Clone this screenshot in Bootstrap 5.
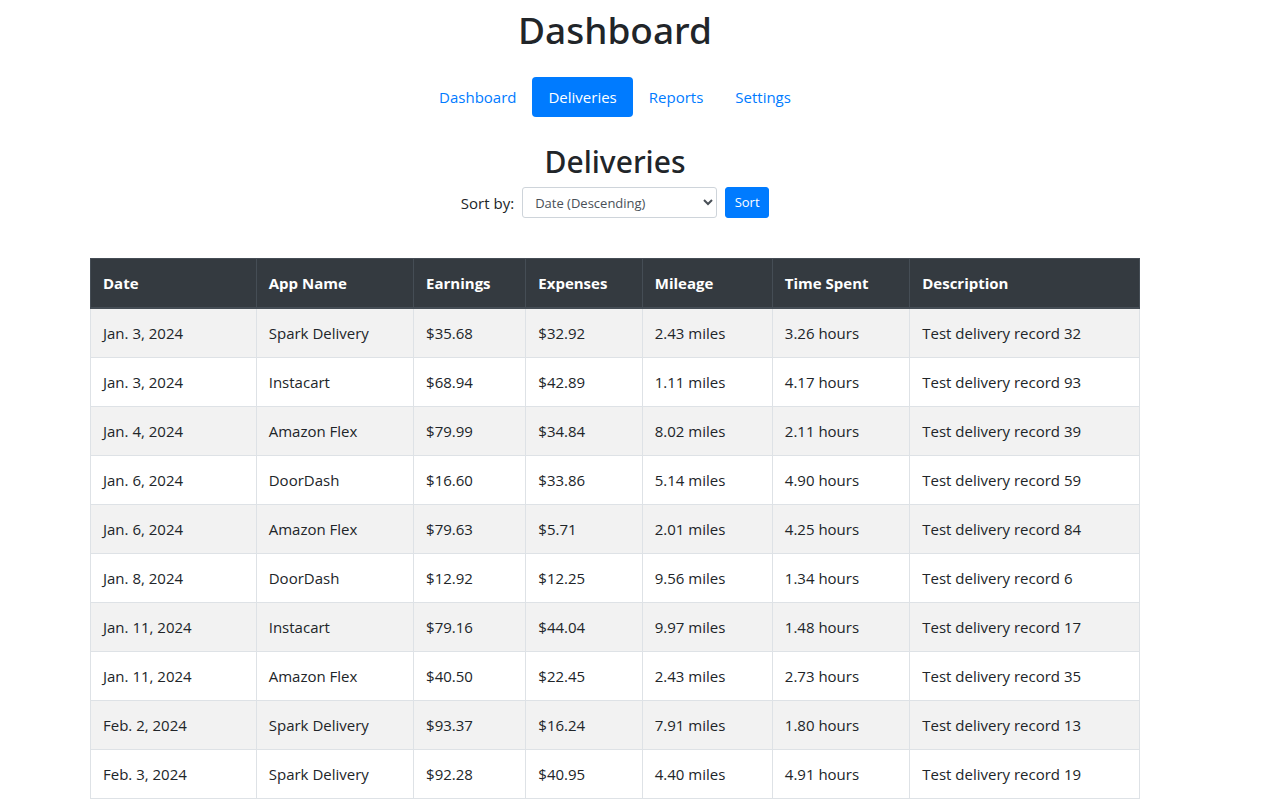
<!DOCTYPE html>
<html lang="en">
<head>
<meta charset="utf-8">
<meta name="viewport" content="width=device-width, initial-scale=1">
<title>Dashboard</title>
<link href="https://cdn.jsdelivr.net/npm/bootstrap@5.3.0/dist/css/bootstrap.min.css" rel="stylesheet">
<style>
  :root { --accent: #007bff; --edge: #dee2e6; --edge-dark: #454d55; }
  body { font-family: "Segoe UI", "Open Sans", "Noto Sans", sans-serif; font-size: 15px; line-height: 24px; padding-right: 43px; }
  .page { max-width: 1140px; padding: 6px 45px 0; }
  h1, h2 { font-family: "Segoe UI", "Noto Sans", "Open Sans", sans-serif; font-weight: 500; }
  h1 { font-size: 37px; line-height: 48px; }
  h2 { font-size: 30px; line-height: 42px; }
  .main-nav { margin-top: 23px; }
  .nav-pills { --bs-nav-pills-link-active-bg: var(--accent); --bs-nav-pills-border-radius: 4px; --bs-nav-link-color: var(--accent); --bs-nav-link-hover-color: #0056b3; }
  .sort-select { width: 195px; height: 31px; padding: 4px 8px; font-size: 13px; line-height: 21px; color: #495057; background: #fff; border: 1px solid #ced4da; border-radius: 3px; }
  .btn-sort { --bs-btn-bg: var(--accent); --bs-btn-border-color: var(--accent); --bs-btn-padding-x: 8px; --bs-btn-padding-y: 4px; --bs-btn-font-size: 13px; --bs-btn-border-radius: 3px; width: 44px; line-height: 21px; }
  .deliveries { table-layout: fixed; margin-top: 40px; border-color: var(--edge); }
  .deliveries th, .deliveries td { padding: 12px; border: 1px solid var(--edge); }
  .deliveries thead th { color: #fff; background: #343a40; border-color: var(--edge-dark); border-bottom-width: 2px; }
  .deliveries tbody tr:nth-child(odd) td { background: #f2f2f2; }
</style>
</head>
<body>
<main class="container-fluid page">
  <h1 class="text-center mb-0">Dashboard</h1>
  <nav aria-label="Main">
    <ul class="nav nav-pills justify-content-center main-nav mb-4">
      <li class="nav-item"><a class="nav-link" href="#">Dashboard</a></li>
      <li class="nav-item"><a class="nav-link active" aria-current="page" href="#">Deliveries</a></li>
      <li class="nav-item"><a class="nav-link" href="#">Reports</a></li>
      <li class="nav-item"><a class="nav-link" href="#">Settings</a></li>
    </ul>
  </nav>
  <h2 class="text-center mb-1">Deliveries</h2>
  <form class="d-flex justify-content-center align-items-center gap-2">
    <label for="sort">Sort by:</label>
    <select class="sort-select" id="sort">
      <option>Date (Descending)</option>
      <option>Date (Ascending)</option>
    </select>
    <button class="btn btn-primary btn-sort" type="submit">Sort</button>
  </form>
  <table class="table deliveries mb-0">
    <colgroup>
      <col style="width:15.8%"><col style="width:15%"><col style="width:10.7%"><col style="width:11.1%"><col style="width:12.4%"><col style="width:13.1%"><col style="width:21.9%">
    </colgroup>
    <thead>
      <tr><th scope="col">Date</th><th scope="col">App Name</th><th scope="col">Earnings</th><th scope="col">Expenses</th><th scope="col">Mileage</th><th scope="col">Time Spent</th><th scope="col">Description</th></tr>
    </thead>
    <tbody>
      <tr><td>Jan. 3, 2024</td><td>Spark Delivery</td><td>$35.68</td><td>$32.92</td><td>2.43 miles</td><td>3.26 hours</td><td>Test delivery record 32</td></tr>
      <tr><td>Jan. 3, 2024</td><td>Instacart</td><td>$68.94</td><td>$42.89</td><td>1.11 miles</td><td>4.17 hours</td><td>Test delivery record 93</td></tr>
      <tr><td>Jan. 4, 2024</td><td>Amazon Flex</td><td>$79.99</td><td>$34.84</td><td>8.02 miles</td><td>2.11 hours</td><td>Test delivery record 39</td></tr>
      <tr><td>Jan. 6, 2024</td><td>DoorDash</td><td>$16.60</td><td>$33.86</td><td>5.14 miles</td><td>4.90 hours</td><td>Test delivery record 59</td></tr>
      <tr><td>Jan. 6, 2024</td><td>Amazon Flex</td><td>$79.63</td><td>$5.71</td><td>2.01 miles</td><td>4.25 hours</td><td>Test delivery record 84</td></tr>
      <tr><td>Jan. 8, 2024</td><td>DoorDash</td><td>$12.92</td><td>$12.25</td><td>9.56 miles</td><td>1.34 hours</td><td>Test delivery record 6</td></tr>
      <tr><td>Jan. 11, 2024</td><td>Instacart</td><td>$79.16</td><td>$44.04</td><td>9.97 miles</td><td>1.48 hours</td><td>Test delivery record 17</td></tr>
      <tr><td>Jan. 11, 2024</td><td>Amazon Flex</td><td>$40.50</td><td>$22.45</td><td>2.43 miles</td><td>2.73 hours</td><td>Test delivery record 35</td></tr>
      <tr><td>Feb. 2, 2024</td><td>Spark Delivery</td><td>$93.37</td><td>$16.24</td><td>7.91 miles</td><td>1.80 hours</td><td>Test delivery record 13</td></tr>
      <tr><td>Feb. 3, 2024</td><td>Spark Delivery</td><td>$92.28</td><td>$40.95</td><td>4.40 miles</td><td>4.91 hours</td><td>Test delivery record 19</td></tr>
    </tbody>
  </table>
</main>
<script src="https://cdn.jsdelivr.net/npm/bootstrap@5.3.0/dist/js/bootstrap.bundle.min.js"></script>
</body>
</html>
